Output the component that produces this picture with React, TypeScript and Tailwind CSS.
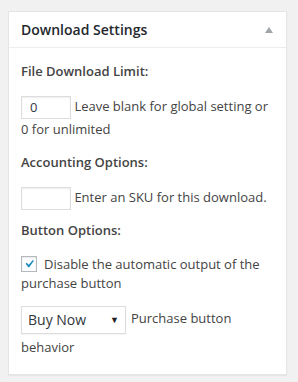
import React from "react";

// Download settings metabox
const Label = ({ children, className = "" }: { children: React.ReactNode; className?: string }) => (
    <p className={`text-[13px] leading-[20px] font-semibold text-[#444] ${className}`}>{children}</p>
);

const TextBox = ({ value }: { value?: string }) => (
    <span className="inline-block align-middle w-[50px] h-[23px] border border-[#ddd] bg-white shadow-[inset_0_1px_2px_rgba(0,0,0,0.07)] pl-[8px] text-[13px] leading-[21px] text-[#32373c]">
        {value}
    </span>
);

const CheckMark = () => (
    <svg viewBox="0 0 20 20" className="w-[16px] h-[16px] -ml-[1px] -mt-[1px]">
        <path d="M14.83 4.89l1.34.94-5.81 8.38H9.02L5.78 9.67l1.34-1.25 2.57 2.4z" fill="#1e8cbe" />
    </svg>
);

export default function App() {
    return (
        <div className="min-h-[382px] bg-[#f1f1f1] pt-[11px] px-[8px] font-['Open_Sans',sans-serif]">
            <div className="w-[279px] border border-[#e5e5e5] bg-white shadow-[0_1px_1px_rgba(0,0,0,0.04)]">
                <div className="flex items-center justify-between h-[36px] px-[12px] border-b border-[#eee]">
                    <h2 className="text-[14px] font-semibold text-[#23282d]">Download Settings</h2>
                    <span className="mr-[1px] w-0 h-0 border-l-[4px] border-r-[4px] border-b-[6px] border-l-transparent border-r-transparent border-b-[#a0a5aa]" />
                </div>
                <div className="px-[12px] pb-[14px] text-[13px] text-[#444]">
                    <Label className="mt-[13px]">File Download Limit:</Label>
                    <p className="mt-[15px] leading-[21px]">
                        <TextBox value="0" /> Leave blank for global setting or 0 for unlimited
                    </p>
                    <Label className="mt-[12px]">Accounting Options:</Label>
                    <p className="mt-[15px] leading-[21px]">
                        <TextBox /> Enter an SKU for this download.
                    </p>
                    <Label className="mt-[10px]">Button Options:</Label>
                    <p className="mt-[15px] leading-[19px]">
                        <span className="inline-block align-[-3px] mr-[7px] w-[16px] h-[16px] border border-[#b4b9be] bg-white shadow-[inset_0_1px_2px_rgba(0,0,0,0.1)]">
                            <CheckMark />
                        </span>
                        Disable the automatic output of the purchase button
                    </p>
                    <p className="mt-[12px] leading-[26px]">
                        <span className="inline-flex align-middle items-center justify-between w-[105px] h-[28px] border border-[#ddd] bg-white shadow-[0_1px_1px_rgba(0,0,0,0.04)] pl-[6px] pr-[6px] mr-[5px] text-[14px] text-[#32373c]">
                            <span>Buy Now</span>
                            <span className="text-[9px] text-[#222]">▼</span>
                        </span>
                        Purchase button behavior
                    </p>
                </div>
            </div>
        </div>
    );
}
